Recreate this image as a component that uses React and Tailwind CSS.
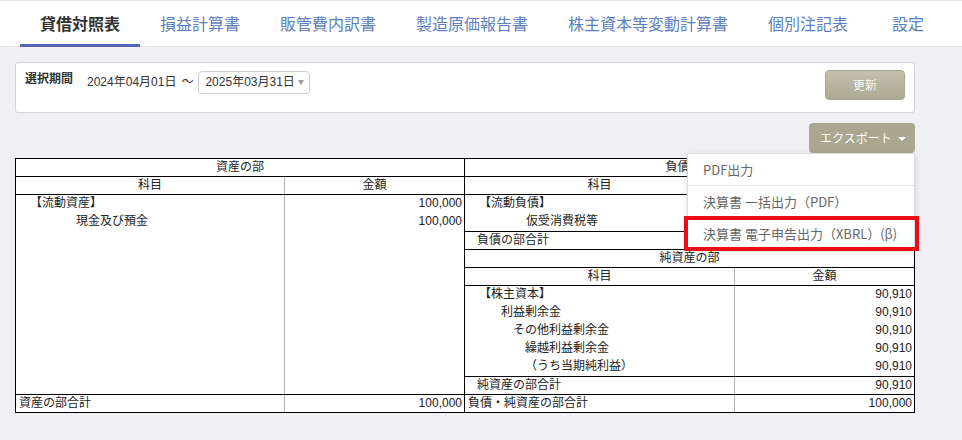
import React from "react";

const jp = "font-['Noto_Sans_CJK_JP',sans-serif]";
const tf = "font-['Liberation_Sans','Noto_Sans_CJK_JP',sans-serif]";

const tabs = [
  { label: "貸借対照表", active: true },
  { label: "損益計算書" },
  { label: "販管費内訳書" },
  { label: "製造原価報告書" },
  { label: "株主資本等変動計算書" },
  { label: "個別注記表" },
  { label: "設定", last: true },
];

function Row({ label, amount, lw, pl, extra = "" }) {
  return (
    <div className={`flex h-[18px] ${extra}`}>
      <div className={`${lw} ${pl} border-r border-[#b0b0b0] whitespace-nowrap leading-[17px]`}>{label}</div>
      <div className="flex-1 text-right pr-[2px] leading-[17px]">{amount}</div>
    </div>
  );
}

function HeadRow({ lw, extra = "" }) {
  return (
    <div className={`flex h-[18px] ${extra}`}>
      <div className={`${lw} border-r border-[#b0b0b0] text-center leading-[17px]`}>科目</div>
      <div className="flex-1 text-center leading-[17px]">金額</div>
    </div>
  );
}

export default function App() {
  return (
    <div className={`w-[962px] h-[440px] bg-[#f0f0f4] ${jp} overflow-hidden`}>
      {/* Tabs */}
      <div className="flex pl-[20px] bg-white border-t border-[#e4e4e8] border-b border-[#d4d4da]">
        {tabs.map((t) => (
          <div
            key={t.label}
            className={
              t.active
                ? "h-[46px] -mb-px px-[20px] flex items-center border-b-[3px] border-[#5567b2] text-[16px] font-bold text-[#333]"
                : t.last
                ? "h-[46px] -mb-px pl-[24px] pr-[20px] flex items-center border-b-[3px] border-transparent text-[16px] text-[#5b7fc2]"
                : "h-[46px] -mb-px px-[20px] flex items-center border-b-[3px] border-transparent text-[16px] text-[#5b7fc2]"
            }
          >
            {t.label}
          </div>
        ))}
      </div>

      <div className="px-[15px] pt-[15px]">
        {/* Period panel */}
        <div className="w-[900px] bg-white border border-[#d2d2d8] rounded-[3px] flex items-start justify-between pl-[9px] pr-[9px] pt-[7px] pb-[12px]">
          <div className={`flex items-start ${tf} text-[12px] text-[#333]`}>
            <div className="font-bold leading-[18px]">選択期間</div>
            <div className="ml-[14px] mt-[1px] leading-[23px]">2024年04月01日</div>
            <div className="ml-[5px] mt-[1px] leading-[23px]">〜</div>
            <div className="ml-[5px] mt-[1px] h-[23px] w-[112px] border border-[#cfcfcf] rounded-[4px] flex items-center pl-[6px] pr-[5px] justify-between">
              <span className="leading-[21px]">2025年03月31日</span>
              <span className="w-0 h-0 border-x-[3px] border-x-transparent border-t-[5px] border-t-[#9a9a9a]" />
            </div>
          </div>
          <div className="w-[80px] h-[30px] rounded-[4px] border border-[#a8a68f] bg-gradient-to-b from-[#c3c1ad] to-[#aba991] flex items-center justify-center text-white text-[12px] [text-shadow:0_0_1px_rgba(0,0,0,0.15)]">
            更新
          </div>
        </div>

        {/* Export */}
        <div className="w-[900px] flex justify-end mt-[10px]">
          <div className="relative">
            <div className="w-[106px] h-[30px] rounded-[4px] bg-[#a9a790] flex items-center pl-[11px] text-white text-[12px]">
              <span>エクスポート</span>
              <span className="ml-[6px] mt-[1px] w-0 h-0 border-x-[4px] border-x-transparent border-t-[4px] border-t-white" />
            </div>
            <div className="absolute right-0 top-full w-[228px] bg-white border border-[#dcdcdc] shadow-[0_2px_6px_rgba(0,0,0,0.12)] z-10 text-[13px] text-[#666]">
              <div className="h-[32px] flex items-center pl-[15px] border-b border-[#e2e2e2]">PDF出力</div>
              <div className="h-[32px] flex items-center pl-[15px] border-b border-[#e2e2e2]">決算書 一括出力（PDF）</div>
              <div className="h-[32px] flex items-center pl-[15px]">決算書 電子申告出力（XBRL）(β)</div>
              <div className="absolute left-[-4px] top-[62px] w-[235px] h-[35px] border-[4px] border-[#ec0d12]" />
            </div>
          </div>
        </div>

        {/* Table */}
        <div className={`mt-[5px] w-[900px] border border-black bg-white flex ${tf} text-[12px] text-[#222]`}>
          {/* Left */}
          <div className="w-[449px] border-r border-black flex flex-col">
            <div className="h-[18px] border-b border-black text-center leading-[17px]">資産の部</div>
            <HeadRow lw="w-[269px]" extra="border-b border-black" />
            <Row lw="w-[269px]" pl="pl-[14px]" label="【流動資産】" amount="100,000" />
            <Row lw="w-[269px]" pl="pl-[60px]" label="現金及び預金" amount="100,000" />
            <div className="flex-1 flex">
              <div className="w-[269px] border-r border-[#b0b0b0]" />
              <div className="flex-1" />
            </div>
            <Row lw="w-[269px]" pl="pl-[3px]" label="資産の部合計" amount="100,000" extra="border-t border-black" />
          </div>
          {/* Right */}
          <div className="flex-1 flex flex-col">
            <div className="h-[18px] border-b border-black text-center leading-[17px]">負債の部</div>
            <HeadRow lw="w-[270px]" extra="border-b border-black" />
            <Row lw="w-[270px]" pl="pl-[14px]" label="【流動負債】" amount="" />
            <Row lw="w-[270px]" pl="pl-[61px]" label="仮受消費税等" amount="" />
            <Row lw="w-[270px]" pl="pl-[12px]" label="負債の部合計" amount="" extra="border-t border-black" />
            <div className="h-[18px] border-t border-black text-center leading-[17px]">純資産の部</div>
            <HeadRow lw="w-[270px]" extra="h-[19px] border-t border-b border-black" />
            <Row lw="w-[270px]" pl="pl-[14px]" label="【株主資本】" amount="90,910" />
            <Row lw="w-[270px]" pl="pl-[36px]" label="利益剰余金" amount="90,910" />
            <Row lw="w-[270px]" pl="pl-[48px]" label="その他利益剰余金" amount="90,910" />
            <Row lw="w-[270px]" pl="pl-[60px]" label="繰越利益剰余金" amount="90,910" />
            <Row lw="w-[270px]" pl="pl-[60px]" label="（うち当期純利益）" amount="90,910" />
            <Row lw="w-[270px]" pl="pl-[12px]" label="純資産の部合計" amount="90,910" extra="border-t border-black" />
            <Row lw="w-[270px]" pl="pl-[3px]" label="負債・純資産の部合計" amount="100,000" extra="border-t border-black" />
          </div>
        </div>
      </div>
    </div>
  );
}
